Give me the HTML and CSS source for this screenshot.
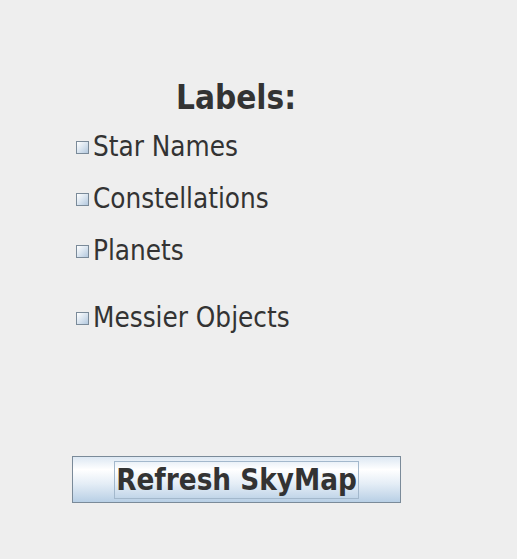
FILE: index.html
```html
<!DOCTYPE html>
<html>
<head>
<meta charset="utf-8">
<link rel="stylesheet" href="styles.css">
</head>
<body>
<div class="panel">
  <h1 class="title">Labels:</h1>
  <div class="options">
    <label class="opt opt-star"><span class="box"></span><span class="txt">Star Names</span></label>
    <label class="opt opt-const"><span class="box"></span><span class="txt">Constellations</span></label>
    <label class="opt opt-planets"><span class="box"></span><span class="txt">Planets</span></label>
    <label class="opt opt-messier"><span class="box"></span><span class="txt">Messier Objects</span></label>
  </div>
  <button class="refresh"><span class="focus">Refresh SkyMap</span></button>
</div>
</body>
</html>
```
FILE: styles.css
```css
html, body {
  margin: 0;
  padding: 0;
  background: #eeeeee;
  width: 517px;
  height: 559px;
  overflow: hidden;
}
.panel {
  font-family: "DejaVu Sans Condensed", "DejaVu Sans", sans-serif;
  color: #333333;
  padding-top: 76px;
}
.title {
  margin: 0;
  width: 472px;
  text-align: center;
  font-size: 33px;
  font-weight: bold;
  line-height: 44px;
}
.options {
  display: flex;
  flex-direction: column;
  padding-left: 76px;
  margin-top: 1px;
}
.opt {
  display: flex;
  align-items: center;
  height: 52px;
  font-size: 27.6px;
}
.opt-messier {
  margin-top: 15px;
}
.box {
  width: 11px;
  height: 11px;
  border: 1px solid #7a8a99;
  background: linear-gradient(135deg, #ffffff 0%, #d6e2ee 55%, #b3c8de 100%);
  margin-right: 4px;
  margin-top: 0;
  flex: none;
}
.txt {
  line-height: 32px;
}
.refresh {
  display: flex;
  align-items: center;
  justify-content: center;
  margin: 112px 0 0 72px;
  width: 329px;
  height: 47px;
  border: 1px solid #7a8a99;
  background: linear-gradient(to bottom, #dde8f3 0%, #ffffff 28%, #e4edf6 60%, #b8cfe5 100%);
  padding: 0;
  font-family: "DejaVu Sans Condensed", "DejaVu Sans", sans-serif;
  font-weight: bold;
  font-size: 29.3px;
  color: #333333;
}
.focus {
  border: 1px solid #a3b8cc;
  padding: 0 1px;
  line-height: 36px;
}
```
